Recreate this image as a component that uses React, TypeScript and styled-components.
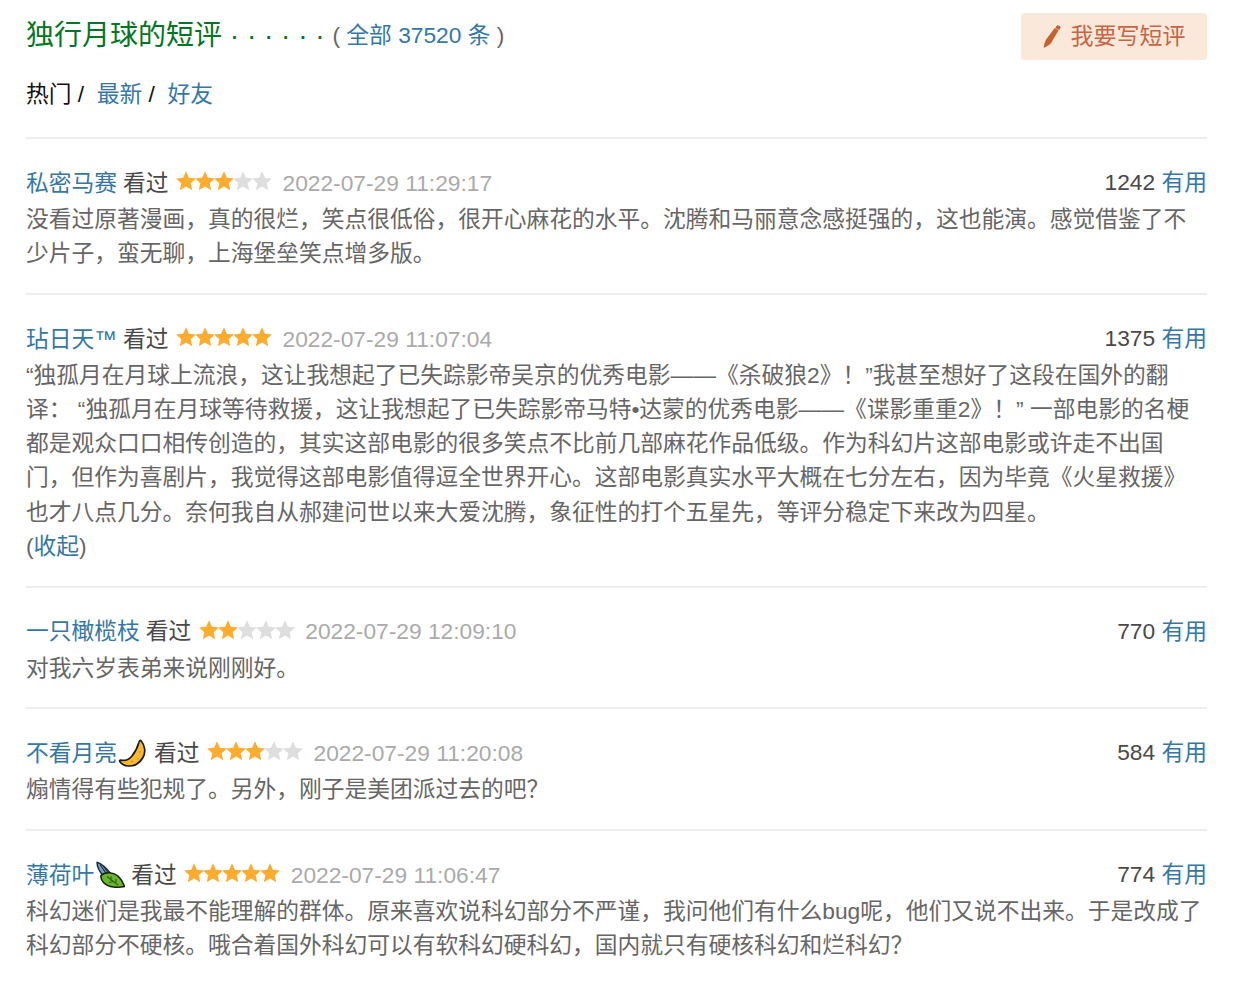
import React from "react";
import styled, { createGlobalStyle } from "styled-components";

const Global = createGlobalStyle`
  html, body { margin: 0; padding: 0; background: #fff; }
  body { font-family: "Liberation Sans", "Noto Sans CJK SC", sans-serif; font-size: 22.75px; line-height: 34.125px; color: #494949; }
  a { color: #37a; text-decoration: none; }
`;

const Page = styled.div`
  width: 1181px;
  padding: 0 30px 0 26px;
  overflow: hidden;
`;
const Header = styled.header`
  display: flex;
  justify-content: space-between;
  align-items: flex-start;
  padding-top: 13px;
  height: 47px;
`;
const Title = styled.h2`
  margin: 4px 0 0;
  font-weight: 400;
  font-size: 28px;
  line-height: 38px;
  color: #007722;
  white-space: nowrap;
`;
const Total = styled.span`
  font-size: 22.75px;
  color: #666;
  vertical-align: 2px;
  line-height: 1;
  a { color: #37a; }
`;
const WriteButton = styled.a`
  display: flex;
  align-items: center;
  justify-content: center;
  gap: 10px;
  width: 186px;
  height: 47px;
  border-radius: 4px;
  background: #fae9da;
  && { color: #ca6445; }
  font-size: 23px;
`;
const Nav = styled.nav`
  margin-top: 17px;
  height: 34px;
  padding-bottom: 26px;
  border-bottom: 2px solid #eee;
  color: #111;
  white-space: pre;
`;
const Item = styled.article<{ $last?: boolean }>`
  padding: 26px 0 ${p => (p.$last ? "0" : "22.75px")};
  border-bottom: ${p => (p.$last ? "none" : "2px solid #eee")};
`;
const Meta = styled.div`
  display: flex;
  justify-content: space-between;
  height: 36px;
  margin-bottom: 1px;
  white-space: nowrap;
`;
const Left = styled.div`
  display: flex;
  align-items: center;
`;
const Name = styled.a`
  display: flex;
  align-items: center;
`;
const Seen = styled.span`
  margin-left: 6px;
  color: #494949;
`;
const Stars = styled.span`
  display: inline-flex;
  margin: -4px 11.5px 0 7.5px;
`;
const StarIcon = styled.svg`
  display: block;
  width: 20px;
  height: 20px;
  margin-right: -1px;
`;
const Date = styled.span`
  color: #aaa;
`;
const Votes = styled.span`
  color: #494949;
`;
const Body = styled.p`
  margin: 0;
  color: #666;
`;

const Star = ({ on }: { on: boolean }) => (
  <StarIcon viewBox="0 0 20 20" aria-hidden="true">
    <path
      fill={on ? "#ffac2d" : "#dedede"}
      d="M10 .3l2.900 6.500 7 .7-5.200 4.700 1.500 7-6.200-3.600-6.200 3.600 1.500-7L.1 7.500l7-.7z"
    />
  </StarIcon>
);

const Moon = () => (
  <svg width="31" height="28" viewBox="0 0 31 28" aria-hidden="true">
    <path
      d="M24 1.800c4.200 4.800 5 11.700 1.800 17-3 5-8.300 8.400-14 8.200-3.800-.1-7.300-1.800-9-4.500-.5-.9 0-1.500 1-1.300 4 .8 8-.5 11-4 3-3.600 5.500-8 7-13.500.4-1.700 1.300-2.900 2.200-1.900z"
      fill="#fbb92f"
      stroke="#1a1a1a"
      strokeWidth="1.700"
      strokeLinejoin="round"
    />
    <circle cx="23" cy="13" r="1" fill="#d98d1e" />
    <circle cx="15" cy="22.500" r="1" fill="#d98d1e" />
    <circle cx="21" cy="20" r=".8" fill="#d98d1e" />
  </svg>
);

const Leaf = () => (
  <svg width="31" height="28" viewBox="0 0 31 28" aria-hidden="true">
    <path d="M3 1.200c4 1 10 6 13.500 11.300L9 14.500C5.500 10.500 3 6 3 1.200z" fill="#6f9fc4" stroke="#1c2b38" strokeWidth="1.400" strokeLinejoin="round" />
    <path d="M6 3.500l6.500 9.500M9.500 5.500l5 6.500" stroke="#1c2b38" strokeWidth="1.100" fill="none" />
    <path d="M7 14.500C11 10.500 19 11 24 15c3 2.800 5 6 6.500 10.500-6.500 1.500-16 1-20.500-3.500-2-2-3.500-4.500-3-7.500z" fill="#6bb52e" stroke="#14210a" strokeWidth="1.600" strokeLinejoin="round" />
    <path d="M13 15.500l11 8.500M17 15.500v4.500M15 21.500l5-1M22 21.500v-3.500" stroke="#2e6413" strokeWidth="1.200" fill="none" />
  </svg>
);

const Pencil = () => (
  <svg width="18" height="23" viewBox="0 0 18 23" aria-hidden="true">
    <path fill="#c6622b" d="M14.200.4c.9-.4 2.600.5 3.200 1.400.3.500.2 1-.1 1.500l-1 1.800-3.900-2.200 1-1.800c.2-.3.500-.6.800-.7zM11.700 3.100l3.900 2.200-7.800 13.300c-1.900 1.600-4 3-6.300 4-.5.200-.9-.1-.8-.6.400-2.500 1.100-4.900 2.200-7.200z" />
  </svg>
);

type Review = {
  name: string;
  icon?: React.ReactNode;
  stars: number;
  date: string;
  votes: number;
  text: string;
  more?: boolean;
};

const reviews: Review[] = [
  { name: "私密马赛", stars: 3, date: "2022-07-29 11:29:17", votes: 1242, text: "没看过原著漫画，真的很烂，笑点很低俗，很开心麻花的水平。沈腾和马丽意念感挺强的，这也能演。感觉借鉴了不少片子，蛮无聊，上海堡垒笑点增多版。" },
  { name: "玷日天™", stars: 5, date: "2022-07-29 11:07:04", votes: 1375, more: true, text: "“独孤月在月球上流浪，这让我想起了已失踪影帝吴京的优秀电影——《杀破狼2》！”我甚至想好了这段在国外的翻译： “独孤月在月球等待救援，这让我想起了已失踪影帝马特•达蒙的优秀电影——《谍影重重2》！” 一部电影的名梗都是观众口口相传创造的，其实这部电影的很多笑点不比前几部麻花作品低级。作为科幻片这部电影或许走不出国门，但作为喜剧片，我觉得这部电影值得逗全世界开心。这部电影真实水平大概在七分左右，因为毕竟《火星救援》也才八点几分。奈何我自从郝建问世以来大爱沈腾，象征性的打个五星先，等评分稳定下来改为四星。" },
  { name: "一只橄榄枝", stars: 2, date: "2022-07-29 12:09:10", votes: 770, text: "对我六岁表弟来说刚刚好。" },
  { name: "不看月亮", icon: <Moon />, stars: 3, date: "2022-07-29 11:20:08", votes: 584, text: "煽情得有些犯规了。另外，刚子是美团派过去的吧？" },
  { name: "薄荷叶", icon: <Leaf />, stars: 5, date: "2022-07-29 11:06:47", votes: 774, text: "科幻迷们是我最不能理解的群体。原来喜欢说科幻部分不严谨，我问他们有什么bug呢，他们又说不出来。于是改成了科幻部分不硬核。哦合着国外科幻可以有软科幻硬科幻，国内就只有硬核科幻和烂科幻？" },
];

export default function App() {
  return (
    <Page>
      <Global />
      <Header>
        <Title>
          独行月球的短评 · · · · · · <Total>( <a href="#">全部 37520 条</a> )</Total>
        </Title>
        <WriteButton href="#"><Pencil />我要写短评</WriteButton>
      </Header>
      <Nav>热门 /  <a href="#">最新</a> /  <a href="#">好友</a></Nav>
      {reviews.map((r, i) => (
        <Item key={r.name} $last={i === reviews.length - 1}>
          <Meta>
            <Left>
              <Name href="#">{r.name}{r.icon}</Name>
              <Seen>看过</Seen>
              <Stars>
                {[1, 2, 3, 4, 5].map(n => <Star key={n} on={n <= r.stars} />)}
              </Stars>
              <Date>{r.date}</Date>
            </Left>
            <Votes>{r.votes} <a href="#">有用</a></Votes>
          </Meta>
          <Body>
            {r.text}
            {r.more && <><br />(<a href="#">收起</a>)</>}
          </Body>
        </Item>
      ))}
    </Page>
  );
}
